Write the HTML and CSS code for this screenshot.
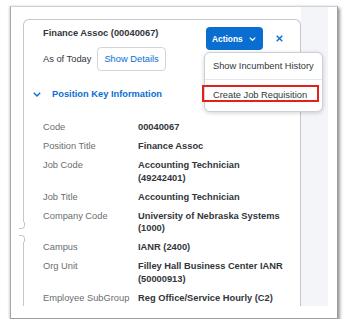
FILE: index.html
```html
<!DOCTYPE html>
<html lang="en">
<head>
<meta charset="utf-8">
<title>Position</title>
<link rel="stylesheet" href="styles.css">
</head>
<body>
<div class="frame">
  <div class="viewport">
    <div class="pane">
      <div class="card">
        <span class="notch"></span>
        <div class="header">
          <div class="head-left">
            <div class="title">Finance Assoc (00040067)</div>
            <div class="asof">
              <span class="asof-label">As of Today</span>
              <button class="btn-ghost">Show Details</button>
            </div>
          </div>
          <div class="head-right">
            <div class="actions">
              <button class="btn-primary">Actions
                <svg class="chev-white" width="7" height="4" viewBox="0 0 7 4"><path d="M0.7 0.6 L3.5 3.3 L6.3 0.6" fill="none" stroke="#fff" stroke-width="1.3"/></svg>
              </button>
              <div class="menu">
                <div class="menu-item first">Show Incumbent History</div>
                <div class="menu-item">Create Job Requisition</div>
                <div class="highlight"></div>
              </div>
            </div>
            <button class="btn-close" aria-label="Close">
              <svg width="7" height="7" viewBox="0 0 7 7"><path d="M0.7 0.7 L6.3 6.3 M6.3 0.7 L0.7 6.3" fill="none" stroke="#0a6ed1" stroke-width="1.4"/></svg>
            </button>
          </div>
        </div>
        <div class="section-head">
          <svg width="8" height="5" viewBox="0 0 8 5"><path d="M0.8 0.8 L4 4 L7.2 0.8" fill="none" stroke="#0a6ed1" stroke-width="1.4"/></svg>
          <span>Position Key Information</span>
        </div>
        <dl class="fields">
          <dt>Code</dt><dd>00040067</dd>
          <dt>Position Title</dt><dd>Finance Assoc</dd>
          <dt>Job Code</dt><dd>Accounting Technician (49242401)</dd>
          <dt>Job Title</dt><dd>Accounting Technician</dd>
          <dt>Company Code</dt><dd>University of Nebraska Systems (1000)</dd>
          <dt>Campus</dt><dd>IANR (2400)</dd>
          <dt>Org Unit</dt><dd>Filley Hall Business Center IANR (50000913)</dd>
          <dt>Employee SubGroup</dt><dd>Reg Office/Service Hourly (C2)</dd>
        </dl>
      </div>
    </div>
    <div class="strip"></div>
  </div>
</div>
</body>
</html>
```
FILE: styles.css
```css
* { box-sizing: border-box; }
body {
  margin: 0;
  background: #fff;
  font-family: "Liberation Sans", Arial, sans-serif;
  font-size: 9.3px;
  color: #32363a;
}
.frame {
  margin: 6px 0 0 10px;
  width: 328px;
  height: 313px;
  border: 1px solid #d2d2d2;
  border-left-color: #a8a8a8;
  border-right-color: #9c9c9c;
  border-bottom-color: #9c9c9c;
  box-shadow: 2px 2px 3px rgba(0,0,0,.4), -1px 0 2px rgba(0,0,0,.15);
  padding: 0 9px 12px 0;
  background: #fff;
}
.viewport {
  display: flex;
  height: 299px;
  overflow: hidden;
}
.pane {
  width: 290px;
  flex: none;
  padding: 12px 0 0 12px;
}
.strip {
  flex: 1;
  background: #f4f5f8;
}
.card {
  position: relative;
  height: 320px;
  border: 1px solid #c4c7cc;
  border-bottom: none;
  border-radius: 6px 6px 0 0;
  background: #fff;
}
.notch {
  position: absolute;
  left: -2px;
  top: 202px;
  width: 3px;
  height: 20px;
  background: #fff;
}
.notch::before,
.notch::after {
  content: "";
  position: absolute;
  left: -3px;
  width: 5px;
  height: 6px;
  border-right: 1px solid #c4c7cc;
}
.notch::before {
  top: 0;
  border-bottom: 1px solid #c4c7cc;
  border-bottom-right-radius: 4px;
}
.notch::after {
  bottom: 0;
  border-top: 1px solid #c4c7cc;
  border-top-right-radius: 4px;
}
.header {
  display: flex;
  justify-content: space-between;
  align-items: flex-start;
  padding: 7px 11px 0 19px;
}
.title {
  font-weight: bold;
  line-height: 12px;
}
.asof {
  display: flex;
  align-items: center;
  gap: 6px;
  margin-top: 8px;
}
.btn-ghost {
  height: 24px;
  padding: 0 6px;
  border: 1px solid #d3d6d9;
  border-radius: 4px;
  background: #fff;
  color: #0a6ed1;
  font: inherit;
}
.head-right {
  display: flex;
  align-items: flex-start;
}
.actions {
  position: relative;
}
.btn-primary {
  display: flex;
  align-items: center;
  gap: 6px;
  width: 57px;
  height: 23px;
  padding: 0 0 0 6px;
  border: none;
  border-radius: 4px;
  background: #0a6ed1;
  color: #fff;
  font-family: inherit;
  font-weight: bold;
  font-size: 8.4px;
}
.chev-white { flex: none; }
.btn-close {
  display: flex;
  align-items: center;
  justify-content: center;
  width: 20px;
  height: 23px;
  margin-left: 6px;
  padding: 0;
  border: none;
  background: none;
}
.menu {
  position: absolute;
  z-index: 2;
  left: -2px;
  top: calc(100% + 2px);
  width: 119px;
  padding-bottom: 2px;
  border: 1px solid #cdd0d4;
  border-radius: 6px;
  background: #fff;
  box-shadow: 0 1px 4px rgba(0,0,0,.18);
}
.menu-item {
  display: flex;
  align-items: center;
  height: 29px;
  padding-left: 8px;
  white-space: nowrap;
}
.menu-item.first {
  height: 27px;
  border-bottom: 1px solid #e6e7e9;
}
.highlight {
  position: absolute;
  left: -3px;
  top: 32px;
  width: 117px;
  height: 17px;
  border: 2px solid #e0211c;
}
.section-head {
  display: flex;
  align-items: center;
  gap: 11px;
  height: 12.5px;
  margin-top: 17px;
  padding-left: 9px;
  color: #0a6ed1;
  font-weight: bold;
}
.section-head svg { flex: none; }
.fields {
  display: grid;
  grid-template-columns: 95px 148px;
  row-gap: 6.5px;
  margin: 20.5px 0 0;
  padding-left: 19px;
  line-height: 12.5px;
}
.fields dt {
  color: #6a6d70;
}
.fields dd {
  margin: 0;
  font-weight: bold;
}
```
